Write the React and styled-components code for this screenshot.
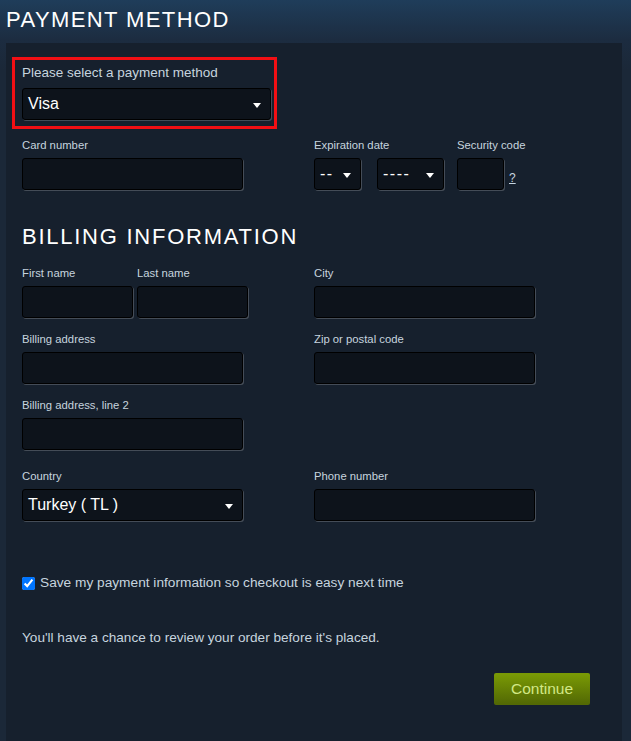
import React from "react";
import styled, { createGlobalStyle } from "styled-components";

const GlobalStyle = createGlobalStyle`
  html, body {
    margin: 0;
    padding: 0;
    height: 100%;
    overflow: hidden;
  }
  body {
    background: #1b2838;
    font-family: "Liberation Sans", Arial, Helvetica, sans-serif;
  }
`;

const Page = styled.div`
  min-height: 100vh;
  box-sizing: border-box;
  display: flex;
  flex-direction: column;
  padding: 0 9px 0 6px;
  background: linear-gradient(to bottom, #1f3d5a 0px, #1c2c40 40px, #1b2838 70px);
`;

const Heading = styled.h2`
  margin: ${(p) => p.$margin};
  font-size: 22px;
  line-height: 26px;
  font-weight: normal;
  color: #ffffff;
  letter-spacing: ${(p) => p.$spacing}px;
  text-transform: uppercase;
  white-space: nowrap;
`;

const Panel = styled.div`
  flex: 1;
  background: #16202d;
  padding: 14px 16px 0;
`;

const Highlight = styled.div`
  width: fit-content;
  margin-left: -10px;
  border: 3px solid #f20f14;
  padding: 5px 3px 6px 7px;
`;

const MainLabel = styled.div`
  font-size: 13.5px;
  line-height: 16px;
  color: #c6d4df;
  margin-bottom: 7px;
`;

const Grid = styled.div`
  display: grid;
  grid-template-columns: 292px 1fr;
  row-gap: 14px;
  margin-top: ${(p) => p.$top || 0}px;
  align-items: start;
`;

const Field = styled.div`
  display: flex;
  flex-direction: column;
  margin-top: ${(p) => p.$top || 0}px;
`;

const Label = styled.label`
  display: block;
  font-size: 11.3px;
  line-height: 14px;
  color: #c6d4df;
  margin-bottom: 6px;
  white-space: nowrap;
`;

const Input = styled.input`
  display: block;
  width: ${(p) => p.$w}px;
  height: 32px;
  box-sizing: border-box;
  margin: 0;
  padding: 0 6px;
  background: #0d131b;
  border: 1px solid #000;
  border-radius: 3px;
  box-shadow: 1px 1px 0 rgba(255, 255, 255, 0.2);
  color: #fff;
  font-family: inherit;
  font-size: 14px;
  outline: none;
`;

const Select = styled.div`
  width: ${(p) => p.$w}px;
  height: 32px;
  box-sizing: border-box;
  display: flex;
  align-items: center;
  justify-content: space-between;
  padding: 0 9px 0 5px;
  background: #0d131b;
  border: 1px solid #000;
  border-radius: 3px;
  box-shadow: 1px 1px 0 rgba(255, 255, 255, 0.2);
  color: #ffffff;
  font-size: 16px;
  letter-spacing: ${(p) => p.$spacing || 0}px;
  white-space: nowrap;
  cursor: pointer;
`;

const Arrow = styled.span`
  width: 0;
  height: 0;
  margin-top: 2px;
  border-left: 4.5px solid transparent;
  border-right: 4.5px solid transparent;
  border-top: 5px solid #ffffff;
  flex-shrink: 0;
`;

const Pair = styled.div`
  display: flex;
  gap: ${(p) => p.$gap}px;
  align-items: flex-end;
`;

const Help = styled.a`
  font-size: 12px;
  line-height: 14px;
  color: #c6d4df;
  text-decoration: underline;
  margin: 0 0 5px 5px;
  cursor: pointer;
`;

const CheckRow = styled.label`
  display: flex;
  align-items: center;
  gap: 5px;
  margin-top: 53px;
  font-size: 13.7px;
  line-height: 18px;
  color: #c6d4df;
`;

const Check = styled.input`
  width: 13px;
  height: 13px;
  margin: 0;
`;

const Note = styled.p`
  margin: 37px 0 0;
  font-size: 13.6px;
  line-height: 18px;
  color: #c6d4df;
`;

const Actions = styled.div`
  display: flex;
  justify-content: flex-end;
  margin-top: 26px;
  padding-right: 16px;
`;

const Button = styled.button`
  height: 32px;
  padding: 0 17px;
  border: none;
  border-radius: 2px;
  background: linear-gradient(to bottom, #799905 5%, #536904 95%);
  color: #d2e885;
  font-family: inherit;
  font-size: 15.5px;
  cursor: pointer;
`;

function SelectBox({ w, value, spacing }) {
  return (
    <Select $w={w} $spacing={spacing}>
      <span>{value}</span>
      <Arrow />
    </Select>
  );
}

export default function App() {
  return (
    <>
      <GlobalStyle />
      <Page>
        <Heading $margin="7px 0 10px" $spacing={1.4}>
          Payment Method
        </Heading>
        <Panel>
          <Highlight>
            <MainLabel>Please select a payment method</MainLabel>
            <SelectBox w={249} value="Visa" />
          </Highlight>

          <Grid $top={9}>
            <Field>
              <Label>Card number</Label>
              <Input $w={221} />
            </Field>
            <Pair $gap={13}>
              <Field>
                <Label>Expiration date</Label>
                <Pair $gap={16}>
                  <SelectBox w={47} value="--" spacing={1.5} />
                  <SelectBox w={67} value="----" spacing={1.5} />
                </Pair>
              </Field>
              <Field>
                <Label>Security code</Label>
                <Pair $gap={0}>
                  <Input $w={47} />
                  <Help>?</Help>
                </Pair>
              </Field>
            </Pair>
          </Grid>

          <Heading $margin="34px 0 16px" $spacing={1.75}>
            Billing Information
          </Heading>

          <Grid>
            <Pair $gap={4}>
              <Field>
                <Label>First name</Label>
                <Input $w={111} />
              </Field>
              <Field>
                <Label>Last name</Label>
                <Input $w={111} />
              </Field>
            </Pair>
            <Field>
              <Label>City</Label>
              <Input $w={221} />
            </Field>

            <Field>
              <Label>Billing address</Label>
              <Input $w={221} />
            </Field>
            <Field>
              <Label>Zip or postal code</Label>
              <Input $w={221} />
            </Field>

            <Field>
              <Label>Billing address, line 2</Label>
              <Input $w={221} />
            </Field>
            <div />

            <Field $top={5}>
              <Label>Country</Label>
              <SelectBox w={221} value="Turkey ( TL )" />
            </Field>
            <Field $top={5}>
              <Label>Phone number</Label>
              <Input $w={221} />
            </Field>
          </Grid>

          <CheckRow>
            <Check type="checkbox" defaultChecked />
            Save my payment information so checkout is easy next time
          </CheckRow>

          <Note>You'll have a chance to review your order before it's placed.</Note>

          <Actions>
            <Button>Continue</Button>
          </Actions>
        </Panel>
      </Page>
    </>
  );
}
